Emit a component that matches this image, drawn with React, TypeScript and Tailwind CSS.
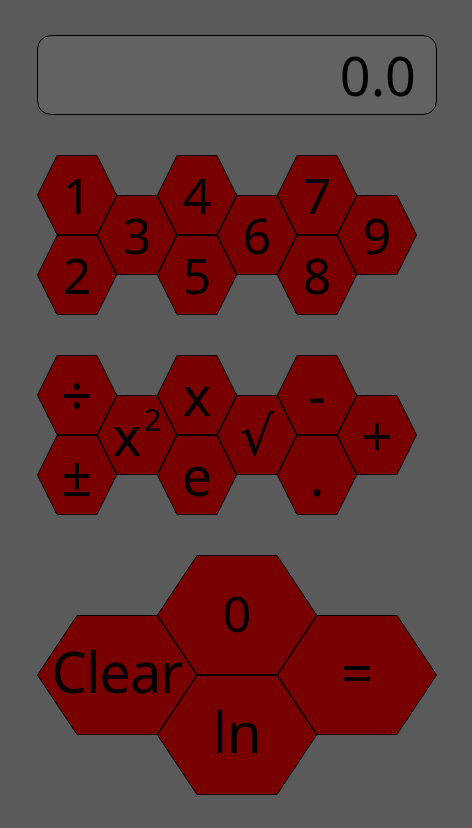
import React from "react";

type HexProps = {
  w: number;
  h: number;
  children: React.ReactNode;
  className?: string;
  textClass?: string;
};

function Hex({ w, h, children, className = "", textClass = "text-[50px]" }: HexProps) {
  const q = w / 4;
  const pts = [
    [q, 0.5],
    [w - q, 0.5],
    [w - 0.5, h / 2],
    [w - q, h - 0.5],
    [q, h - 0.5],
    [0.5, h / 2],
  ]
    .map((p) => p.join(","))
    .join(" ");
  return (
    <div className={"relative flex items-center justify-center " + className} style={{ width: w, height: h }}>
      <svg className="absolute inset-0" width={w} height={h} viewBox={`0 0 ${w} ${h}`}>
        <polygon points={pts} fill="#780000" stroke="#000" strokeWidth="1" />
      </svg>
      <span className={"relative text-black whitespace-nowrap " + textClass}>{children}</span>
    </div>
  );
}

function SmallGrid({ cols }: { cols: React.ReactNode[][] }) {
  return (
    <div className="flex">
      {cols.map((col, i) => (
        <div key={i} className={"flex flex-col " + (i > 0 ? "-ml-[20px] " : "") + (i % 2 === 1 ? "mt-[40px]" : "")}>
          {col.map((label, j) => (
            <Hex key={j} w={80} h={80} textClass={typeof label === "string" && /\d/.test(label) ? "text-[50px]" : "text-[54px]"}>
              {label}
            </Hex>
          ))}
        </div>
      ))}
    </div>
  );
}

export default function App() {
  const digits: React.ReactNode[][] = [["1", "2"], ["3"], ["4", "5"], ["6"], ["7", "8"], ["9"]];
  const ops: React.ReactNode[][] = [
    ["÷", "±"],
    [
      <span key="sq" className="inline-flex items-start">
        <span>x</span>
        <span className="text-[31px] mt-[1px] ml-[2px]">2</span>
      </span>,
    ],
    ["x", "e"],
    [<span key="rt" className="font-['DejaVu_Sans',sans-serif]">√</span>],
    ["-", "."],
    ["+"],
  ];

  return (
    <div className="min-h-screen bg-[#5a5a5a] pt-[35px] pl-[37px] font-['Noto_Sans',sans-serif]">
      <div className="w-[400px] h-[80px] rounded-[14px] border border-black bg-[#626262] flex items-center justify-end pr-[20px]">
        <span className="text-[54px] text-black">0.0</span>
      </div>

      <div className="mt-[40px] flex flex-col gap-[40px]">
        <SmallGrid cols={digits} />
        <SmallGrid cols={ops} />

        <div className="flex">
          <div className="mt-[60px]">
            <Hex w={160} h={120} textClass="text-[56px] tracking-[-1px] -top-[4px]">Clear</Hex>
          </div>
          <div className="-ml-[40px] flex flex-col">
            <Hex w={160} h={120} textClass="text-[50px] -top-[2px]">0</Hex>
            <Hex w={160} h={120} textClass="text-[56px] -top-[4px]">ln</Hex>
          </div>
          <div className="-ml-[40px] mt-[60px]">
            <Hex w={160} h={120} textClass="text-[56px] -top-[4px]">=</Hex>
          </div>
        </div>
      </div>
    </div>
  );
}
